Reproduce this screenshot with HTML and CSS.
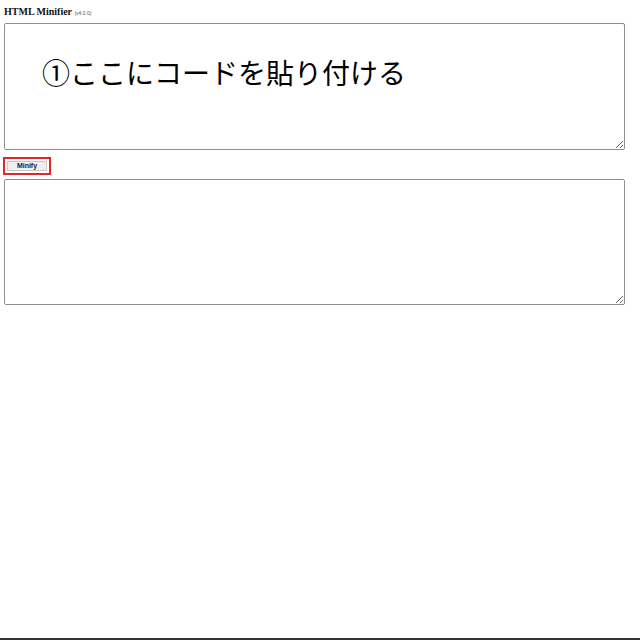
FILE: index.html
```html
<!DOCTYPE html>
<html lang="ja">
<head>
<meta charset="utf-8">
<title>HTML Minifier</title>
<link rel="stylesheet" href="styles.css">
</head>
<body>
<div class="page">
  <h1 class="title">HTML Minifier <span class="ver">(v4.0.0)</span></h1>
  <textarea class="box box-input">①ここにコードを貼り付ける</textarea>
  <div class="btn-row"><span class="mark"><button class="btn" type="button">Minify</button></span></div>
  <textarea class="box box-output"></textarea>
</div>
<div class="bottom-bar"></div>
</body>
</html>
```
FILE: styles.css
```css
html, body {
  margin: 0;
  padding: 0;
  background: #fff;
}
body {
  font-family: "Liberation Serif", serif;
}
.page {
  padding: 6px 4px 0 4px;
  display: flex;
  flex-direction: column;
  align-items: flex-start;
}
.title {
  margin: 0;
  font-family: "Liberation Serif", serif;
  font-size: 10px;
  font-weight: bold;
  line-height: 12px;
  color: #111;
  height: 12px;
}
.ver {
  font-family: "Liberation Sans", sans-serif;
  font-size: 5px;
  font-weight: normal;
  color: #555;
}
.box {
  box-sizing: border-box;
  width: 621px;
  margin: 5px 0 0 0;
  border: 1px solid #8f8f8f;
  border-radius: 2px;
  background: #fff;
  resize: both;
  overflow: hidden;
  font-family: "Noto Sans CJK JP", "Noto Sans", sans-serif;
  color: #000;
}
.box-input {
  height: 127px;
  padding: 28px 10px 0 37px;
  font-size: 28px;
  line-height: 40px;
}
.box-output {
  height: 126px;
  margin-top: 4px;
  padding: 2px;
  font-size: 13px;
}
.btn-row {
  margin-top: 7px;
  display: flex;
}
.mark {
  display: flex;
  border: 2px solid #e3262b;
  padding: 2px;
  margin-left: -1px;
}
.btn {
  width: 40px;
  height: 10px;
  padding: 0;
  margin: 0;
  border: 1px solid #c9c9c9;
  background: #efefef;
  font-family: "Liberation Sans", sans-serif;
  font-size: 7px;
  font-weight: bold;
  line-height: 8px;
  color: #222;
}
.bottom-bar {
  position: fixed;
  left: 0;
  right: 0;
  bottom: 0;
  height: 2px;
  background: #2e3338;
}
```
